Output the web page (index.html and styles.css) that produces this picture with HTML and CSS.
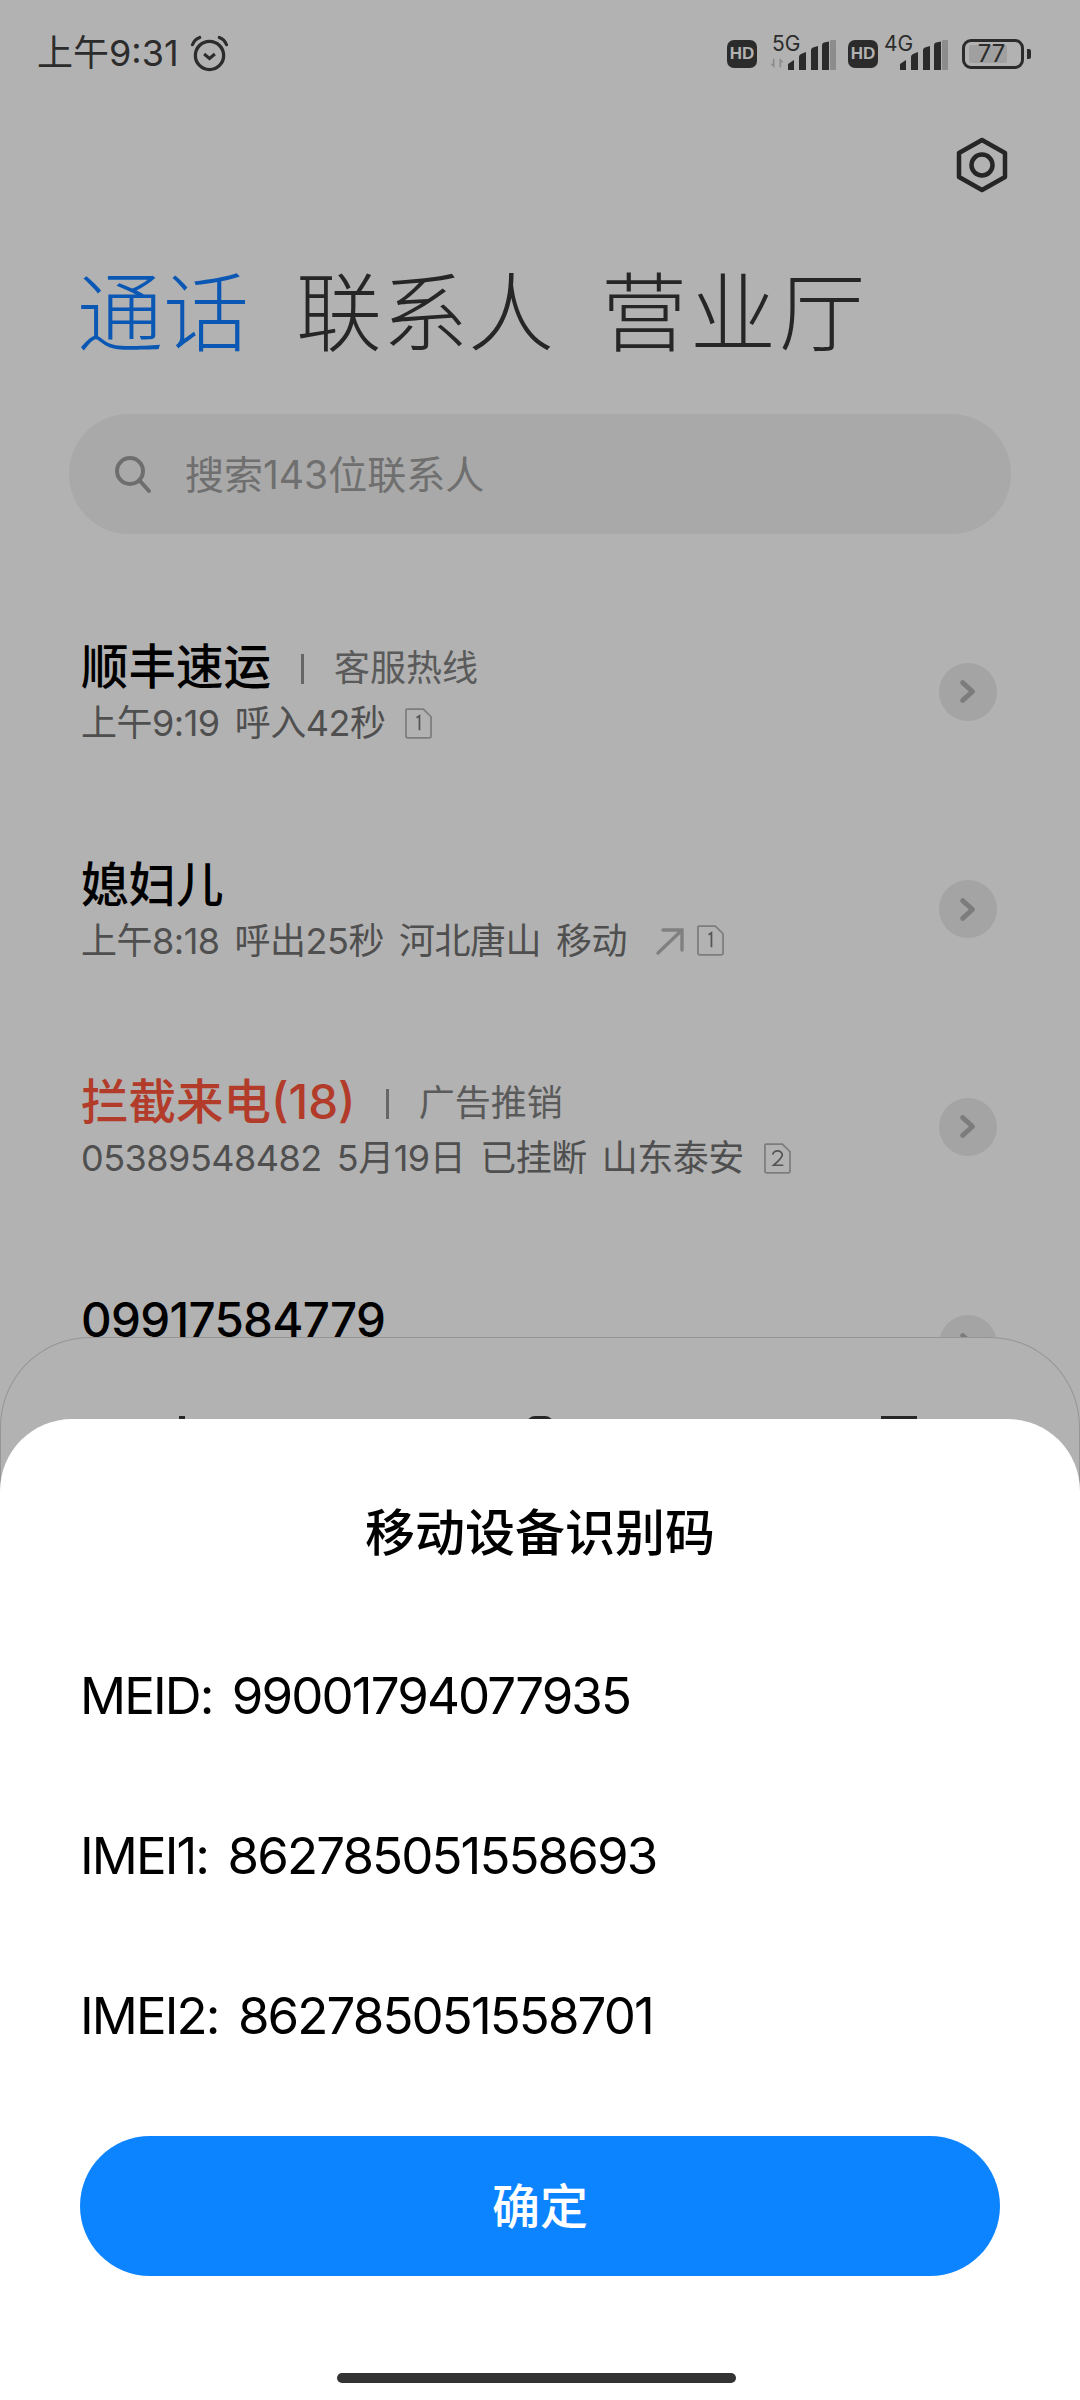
FILE: index.html
```html
<!DOCTYPE html>
<html lang="zh-CN">
<head>
<meta charset="utf-8">
<title>通话</title>
<link rel="stylesheet" href="styles.css">
</head>
<body>
<div class="screen">
  <div class="status">
    <div class="status-left">
      <span class="clock">上午9:31</span>
      <svg class="alarm" viewBox="0 0 40 40"><circle cx="20" cy="22" r="14.5" fill="none" stroke="#2c2c2c" stroke-width="3.4"/><path d="M14.5 20.5l5.5 4.5 5.5-4.5" fill="none" stroke="#2c2c2c" stroke-width="3.2"/><path d="M2.5 11C4 7 7 4.500 10 3.500M37.500 11C36 7 33 4.500 30 3.500" fill="none" stroke="#2c2c2c" stroke-width="3.2" stroke-linecap="round"/></svg>
    </div>
    <div class="status-right">
      <span class="hd">HD</span>
      <span class="net">
        <span class="net-label">5G</span>
        <svg class="arrows" viewBox="0 0 16 12"><path d="M0 7h3V1h2v11zM16 5h-3v6h-2V0z" fill="#8c8c8c"/></svg>
        <svg class="bars" viewBox="0 0 48 30"><path d="M0 30V24l6-4v10zM11 30V17q0-2 2-3l5-2v18zM23 30V10q0-2 2-2.500l5-1.500v24zM34 30V5q0-2 2-2.500l5-1v28.500z" fill="#2b2b2b"/><rect x="42" y="0" width="6" height="30" rx="1" fill="#8c8c8c"/></svg>
      </span>
      <span class="hd">HD</span>
      <span class="net net-4g">
        <span class="net-label net-label-4g">4G</span>
        <svg class="bars" viewBox="0 0 48 30"><path d="M0 30V24l6-4v10zM11 30V17q0-2 2-3l5-2v18zM23 30V10q0-2 2-2.500l5-1.500v24zM34 30V5q0-2 2-2.500l5-1v28.500z" fill="#2b2b2b"/><rect x="42" y="0" width="6" height="30" rx="1" fill="#8c8c8c"/></svg>
      </span>
      <span class="battery"><span class="battery-body"><span class="battery-fill"></span><span class="battery-num">77</span></span><span class="battery-cap"></span></span>
    </div>
  </div>

  <div class="toolbar">
    <svg class="gear" viewBox="0 0 52 56"><path d="M26 3L49 16V40L26 53 3 40V16z" fill="none" stroke="#262626" stroke-width="4.500" stroke-linejoin="round"/><circle cx="26" cy="28" r="10.500" fill="none" stroke="#262626" stroke-width="4.500"/></svg>
  </div>

  <div class="tabs">
    <span class="tab tab-on">通话</span>
    <span class="tab">联系人</span>
    <span class="tab tab-wide">营业厅</span>
  </div>

  <div class="search">
    <svg class="search-icon" viewBox="0 0 40 40"><circle cx="17" cy="17" r="13" fill="none" stroke="#6e6e6e" stroke-width="4"/><path d="M27 27l9 10" stroke="#6e6e6e" stroke-width="4" stroke-linecap="round"/></svg>
    <span class="search-text">搜索143位联系人</span>
  </div>

  <div class="calls">
    <div class="call">
      <div class="call-main">
        <div class="call-title"><span class="name">顺丰速运</span><span class="sep"></span><span class="tag">客服热线</span></div>
        <div class="call-sub"><span>上午9:19</span><span>呼入42秒</span><svg class="sim" viewBox="0 0 28 32"><path d="M2 1h17l8 8v20q0 2-2 2H3q-2 0-2-2V2q0-1 1-1z" fill="none" stroke="#7d7d7d" stroke-width="1.800"/><path d="M12 10l3-2v15" fill="none" stroke="#555" stroke-width="1.800"/></svg></div>
      </div>
      <span class="go"><svg viewBox="0 0 20 28"><path d="M4 4l11 10L4 24" fill="none" stroke="#7c7c7c" stroke-width="5.500" stroke-linecap="round" stroke-linejoin="round"/></svg></span>
    </div>
    <div class="call">
      <div class="call-main">
        <div class="call-title"><span class="name">媳妇儿</span></div>
        <div class="call-sub"><span>上午8:18</span><span>呼出25秒</span><span>河北唐山</span><span>移动</span><svg class="out" viewBox="0 0 30 30"><path d="M3 27L26 5M8 4h19v20" fill="none" stroke="#808080" stroke-width="3.400" stroke-linecap="round"/></svg><svg class="sim sim-tight" viewBox="0 0 28 32"><path d="M2 1h17l8 8v20q0 2-2 2H3q-2 0-2-2V2q0-1 1-1z" fill="none" stroke="#7d7d7d" stroke-width="1.800"/><path d="M12 10l3-2v15" fill="none" stroke="#555" stroke-width="1.800"/></svg></div>
      </div>
      <span class="go"><svg viewBox="0 0 20 28"><path d="M4 4l11 10L4 24" fill="none" stroke="#7c7c7c" stroke-width="5.500" stroke-linecap="round" stroke-linejoin="round"/></svg></span>
    </div>
    <div class="call">
      <div class="call-main">
        <div class="call-title"><span class="name name-red">拦截来电(18)</span><span class="sep"></span><span class="tag">广告推销</span></div>
        <div class="call-sub"><span>05389548482</span><span>5月19日</span><span>已挂断</span><span>山东泰安</span><svg class="sim" viewBox="0 0 28 32"><path d="M2 1h17l8 8v20q0 2-2 2H3q-2 0-2-2V2q0-1 1-1z" fill="none" stroke="#7d7d7d" stroke-width="1.800"/><path d="M9 12q1-4 5-4t5 4q0 3-9 11h10" fill="none" stroke="#555" stroke-width="1.800"/></svg></div>
      </div>
      <span class="go"><svg viewBox="0 0 20 28"><path d="M4 4l11 10L4 24" fill="none" stroke="#7c7c7c" stroke-width="5.500" stroke-linecap="round" stroke-linejoin="round"/></svg></span>
    </div>
    <div class="call">
      <div class="call-main">
        <div class="call-title"><span class="name name-num">09917584779</span></div>
        <div class="call-sub"><span>&nbsp;</span></div>
      </div>
      <span class="go"><svg viewBox="0 0 20 28"><path d="M4 4l11 10L4 24" fill="none" stroke="#7c7c7c" stroke-width="5.500" stroke-linecap="round" stroke-linejoin="round"/></svg></span>
    </div>
  </div>

  <div class="dock">
    <span class="dock-mark dock-mark-a"></span>
    <span class="dock-mark dock-mark-b"></span>
    <span class="dock-mark dock-mark-c"></span>
  </div>

  <div class="sheet">
    <h1 class="sheet-title">移动设备识别码</h1>
    <div class="ids">
      <p class="id">MEID: 99001794077935</p>
      <p class="id">IMEI1: 862785051558693</p>
      <p class="id">IMEI2: 862785051558701</p>
    </div>
    <button class="confirm">确定</button>
    <div class="home-wrap"><span class="home"></span></div>
  </div>
</div>
</body>
</html>
```
FILE: styles.css
```css
* { box-sizing: border-box; }
html, body { margin: 0; padding: 0; }
body {
  font-family: "Inter", "Noto Sans CJK SC", sans-serif;
  background: #b2b2b2;
}
.screen {
  position: relative;
  width: 1080px;
  height: 2400px;
  overflow: hidden;
  background: #b2b2b2;
}

/* status bar */
.status {
  height: 108px;
  padding: 30px 49px 0 37px;
  display: flex;
  justify-content: space-between;
  align-items: flex-start;
}
.status-left { display: flex; align-items: center; gap: 11px; height: 46px; }
.clock { font-size: 36px; line-height: 46px; color: #2c2c2c; }
.alarm { width: 39px; height: 39px; }
.status-right { display: flex; align-items: flex-end; height: 40px; }
.hd {
  width: 30px;
  height: 28px;
  margin-bottom: 2px;
  background: #2b2b2b;
  color: #b2b2b2;
  border-radius: 7px;
  font: 700 17px/28px "Liberation Sans", sans-serif;
  text-align: center;
}
.net { position: relative; display: block; width: 67px; height: 32px; margin: 0 12px; }
.net-4g { width: 64px; margin: 0 14px 0 6px; }
.net-label {
  position: absolute;
  left: 3px;
  top: -5px;
  font-size: 21px;
  line-height: 22px;
  color: #2c2c2c;
}
.net-label-4g { left: 0; }
.arrows { position: absolute; left: 0; bottom: 2px; width: 16px; height: 10px; }
.bars { position: absolute; right: 0; bottom: 0; width: 48px; height: 30px; }
.battery { display: flex; align-items: center; height: 30px; margin-bottom: 1px; }
.battery-body {
  position: relative;
  display: block;
  width: 62px;
  height: 30px;
  border: 3px solid #2b2b2b;
  border-radius: 9px;
}
.battery-fill {
  position: absolute;
  left: 4px;
  top: 3px;
  bottom: 3px;
  width: 38px;
  background: #a0a0a0;
  border-radius: 2px;
}
.battery-num {
  position: absolute;
  left: 0;
  right: 0;
  top: 0;
  padding-right: 3px;
  text-align: center;
  font-size: 24px;
  line-height: 24px;
  color: #2c2c2c;
}
.battery-cap { width: 4px; height: 10px; margin-left: 3px; background: #2b2b2b; border-radius: 0 2px 2px 0; }

/* toolbar */
.toolbar { display: flex; justify-content: flex-end; padding-right: 72px; height: 56px; margin-top: 29px; }
.gear { width: 52px; height: 56px; }

/* tabs */
.tabs {
  display: flex;
  gap: 47px;
  margin-top: 74px;
  padding-left: 77px;
  height: 94px;
  align-items: center;
}
.tab { font-size: 86px; line-height: 94px; font-weight: 300; color: #262626; }
.tab-on { color: #0b57b4; }
.tab-wide { letter-spacing: 3px; }

/* search */
.search {
  display: flex;
  align-items: center;
  height: 120px;
  margin: 53px 69px 0;
  padding-left: 44px;
  border-radius: 60px;
  background: #a9a9a9;
}
.search-icon { width: 40px; height: 40px; }
.search-text { margin: -5px 0 0 32px; font-size: 39px; color: #6f6f6f; }

/* rows */
.calls { margin-top: 49px; }
.call {
  display: flex;
  align-items: center;
  justify-content: space-between;
  height: 217.5px;
  padding: 0 83px 0 81px;
}
.call-title { display: flex; align-items: center; height: 63px; padding-bottom: 6px; }
.name { font-size: 47.5px; line-height: 57px; font-weight: 500; color: #000; }
.name-red { color: #b23b2a; }
.name-num { letter-spacing: -0.7px; }
.sep { width: 3px; height: 30px; margin: 4px 30px 0 30px; background: #666; }
.tag { font-size: 36px; line-height: 57px; color: #5a5a5a; margin-top: 4px; }
.call-sub {
  display: flex;
  align-items: center;
  gap: 15px;
  height: 44px;
  font-size: 36px;
  line-height: 44px;
  letter-spacing: -0.5px;
  color: #4f4f4f;
}
.sim { width: 27px; height: 31px; margin-left: 5px; }
.sim-tight { margin-left: -3px; }
.out { width: 30px; height: 30px; margin-left: 13px; }
.go {
  display: flex;
  align-items: center;
  justify-content: center;
  width: 58px;
  height: 58px;
  border-radius: 50%;
  background: #a4a4a4;
}
.go svg { width: 18px; height: 25px; }

/* bottom nav behind the sheet */
.dock {
  position: absolute;
  left: 0;
  right: 0;
  top: 1337px;
  height: 200px;
  background: #b2b2b2;
  border: 1px solid #969696;
  border-bottom: 0;
  border-radius: 90px 90px 0 0;
}
.dock-mark { position: absolute; top: 78px; background: #262626; }
.dock-mark-a { left: 178px; width: 6px; height: 8px; }
.dock-mark-b { left: 526px; width: 26px; height: 8px; border-radius: 13px 13px 0 0; }
.dock-mark-c { left: 880px; width: 36px; height: 3px; }

/* sheet */
.sheet {
  position: absolute;
  left: 0;
  right: 0;
  bottom: 0;
  height: 981px;
  background: #fff;
  border-radius: 72px 72px 0 0;
  padding: 79px 80px 0;
}
.sheet-title {
  margin: 0;
  text-align: center;
  font-size: 50px;
  line-height: 70px;
  font-weight: 500;
  color: #000;
}
.ids { margin-top: 93px; display: flex; flex-direction: column; gap: 90px; }
.id { margin: 0; font-size: 51px; line-height: 70px; letter-spacing: -1.9px; word-spacing: 7px; color: #000; }
.confirm {
  display: block;
  width: 920px;
  height: 140px;
  margin-top: 85px;
  border: 0;
  border-radius: 70px;
  background: #0d84ff;
  color: #fff;
  font: 500 48px/140px "Inter", "Noto Sans CJK SC", sans-serif;
}
.home-wrap { display: flex; justify-content: center; margin-top: 97px; }
.home { width: 399px; height: 10px; margin-right: 7px; border-radius: 5px; background: #333; }
```
